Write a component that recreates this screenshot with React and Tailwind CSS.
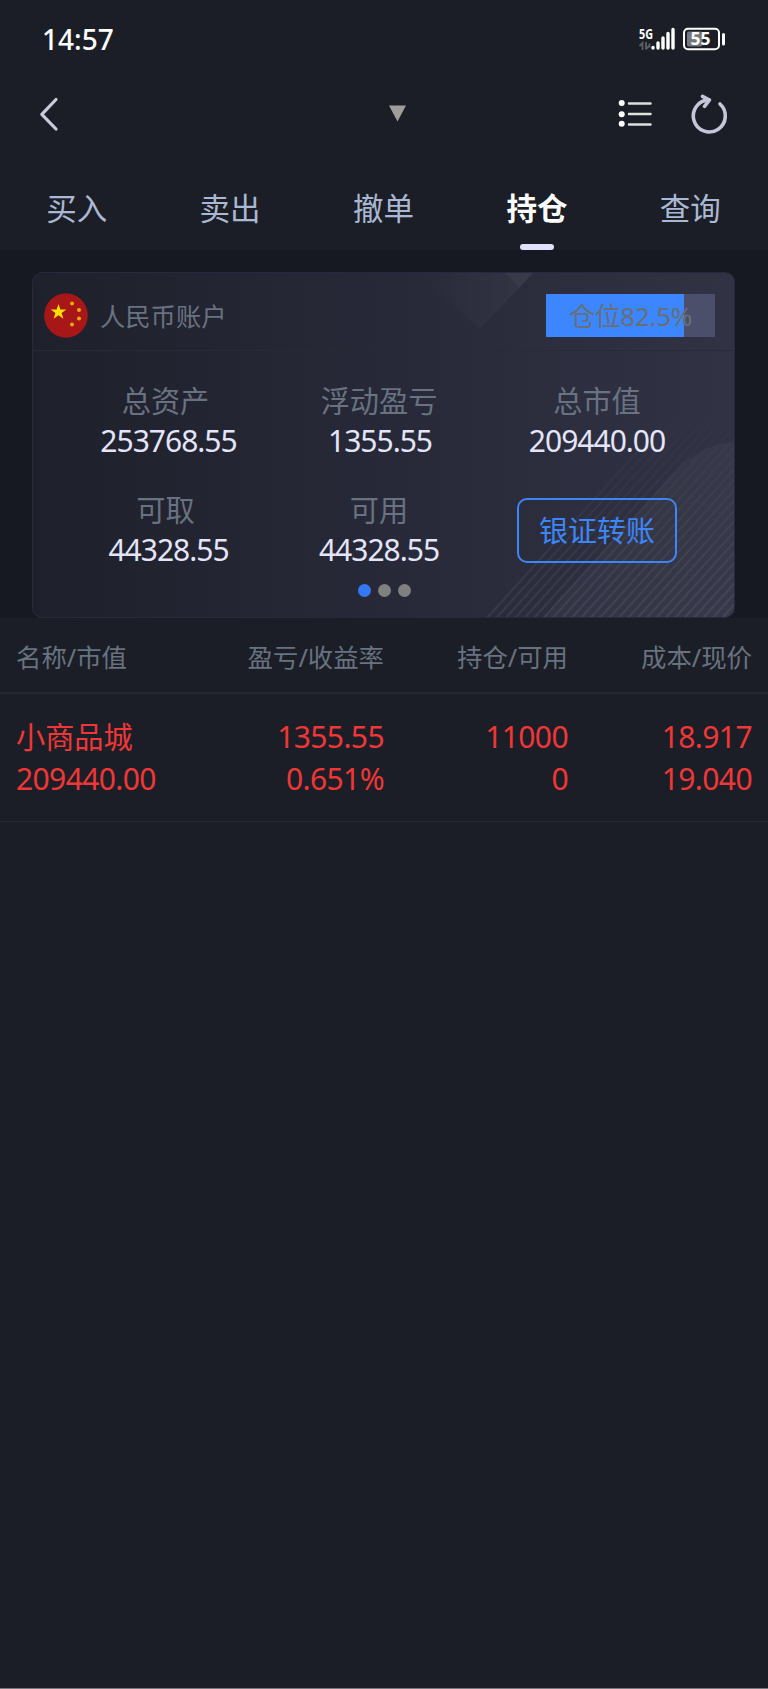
import clsx from 'clsx'

const tabs = ['买入', '卖出', '撤单', '持仓', '查询']

const headers = ['名称/市值', '盈亏/收益率', '持仓/可用', '成本/现价']

const positions = [
  {
    name: '小商品城',
    value: '209440.00',
    profit: '1355.55',
    rate: '0.651%',
    total: '11000',
    available: '0',
    cost: '18.917',
    price: '19.040',
  },
]

const columns = 'grid grid-cols-[184px_184px_184px_184px] pl-4'

function StatusBar() {
  return (
    <div className="flex h-[78px] items-center justify-between pb-px pl-[42px] pr-[42px]">
      <span className="text-[28px] font-medium leading-none text-white">14:57</span>
      <svg className="overflow-visible" width="88" height="30" viewBox="638 23.5 88 30">
        <text x="639" y="38.5" fill="#fff" fontSize="14" fontWeight="700" textLength="14" lengthAdjust="spacingAndGlyphs">5G</text>
        <g stroke="#5d5f66" strokeWidth="1.8" fill="none">
          <path d="M639.500 45.500l3-3v7M646 41.500v7.500M649.500 43v4M646 48.500l3-3" />
        </g>
        <g stroke="#fff" strokeWidth="3.4" strokeLinecap="round">
          <path d="M653 47v.6M658 42.500v5M663 37.500v10M668 33v14.500M673 29v18.500" />
        </g>
        <rect x="684" y="28.300" width="35" height="20.400" rx="4" fill="none" stroke="#fff" strokeWidth="2" />
        <rect x="687" y="31" width="15.500" height="15" rx="2" fill="#77787d" />
        <path d="M723.500 34v9.500" stroke="#fff" strokeWidth="3" strokeLinecap="round" />
        <text x="690.500" y="44.900" fill="#fff" fontSize="18" fontWeight="700" textLength="20" lengthAdjust="spacingAndGlyphs">55</text>
      </svg>
    </div>
  )
}

function NavBar() {
  return (
    <div className="flex h-[76px] items-center justify-between pb-1 pl-9 pr-[38px]">
      <svg width="26" height="40" viewBox="36 94 26 40" fill="none">
        <path d="M56 99.500L41.800 114.300L56 129" stroke="#c9cadd" strokeWidth="3.200" strokeLinecap="round" strokeLinejoin="round" />
      </svg>
      <svg className="ml-[116px]" width="18" height="18" viewBox="388 105.500 18 18">
        <path d="M389 106h17l-8.500 16z" fill="#a09e9d" />
      </svg>
      <svg width="114" height="46" viewBox="616 92 114 46" fill="none">
        <g fill="#fff">
          <circle cx="621.700" cy="104" r="3" />
          <circle cx="621.700" cy="115.300" r="3" />
          <circle cx="621.700" cy="124.800" r="3" />
        </g>
        <path d="M629 104.500h21.500M629 115h21.500M629 125.500h21.500" stroke="#e0e0e0" strokeWidth="2.500" strokeLinecap="round" />
        <g stroke="#c5c6d9" strokeWidth="3.600" strokeLinecap="round" strokeLinejoin="round">
          <path d="M720 105A16 16 0 1 1 709 100.900" />
          <path d="M702.500 97.300L709.500 101L704.500 107.300" />
        </g>
      </svg>
    </div>
  )
}

function Tabs({ active }) {
  return (
    <div className="grid h-24 w-[767px] grid-cols-5">
      {tabs.map((tab) => (
        <div
          key={tab}
          className={clsx(
            'flex flex-col items-center justify-between pt-[34px] text-[30.5px] leading-10',
            tab === active ? 'font-bold text-white' : 'text-[#aab8d3]'
          )}
        >
          <span>{tab}</span>
          {tab === active && <span className="h-1.5 w-[34px] rounded-sm bg-[#e2e0fb]" />}
        </div>
      ))}
    </div>
  )
}

function ChinaFlag() {
  return (
    <svg width="44" height="45" viewBox="0 0 44 45">
      <ellipse cx="22" cy="22.500" rx="21.800" ry="22.200" fill="#a71717" />
      <path d="M14.500 11l1.900 5.500h5.900l-4.700 3.500 1.800 5.700-4.900-3.500-4.900 3.500 1.800-5.700-4.700-3.500h5.900z" fill="#ffde00" />
      <g fill="#f0a80e">
        <circle cx="28" cy="10.500" r="2" />
        <circle cx="35" cy="17" r="2" />
        <circle cx="35" cy="25.500" r="2" />
        <circle cx="28" cy="31.500" r="2" />
      </g>
    </svg>
  )
}

// Faint triangles and diagonal stripes behind the card content
function CardPattern() {
  return (
    <svg className="absolute inset-0" width="703" height="346" viewBox="0 0 703 346" fill="none">
      <defs>
        <linearGradient id="tri" x1="0" y1="0" x2="1" y2="0">
          <stop offset="0" stopColor="#fff" stopOpacity="0" />
          <stop offset="1" stopColor="#fff" stopOpacity="0.04" />
        </linearGradient>
        <linearGradient id="fade" x1="0" y1="346" x2="0" y2="130" gradientUnits="userSpaceOnUse">
          <stop offset="0" stopColor="#fff" stopOpacity="0.07" />
          <stop offset="1" stopColor="#fff" stopOpacity="0" />
        </linearGradient>
      </defs>
      <path d="M385 0h115l-53 56z" fill="url(#tri)" />
      <path d="M473 0h27l-14 15z" fill="#fff" fillOpacity="0.03" />
      <path d="M509 346L630 211Q665 169 703 169V346z" fill="#fff" fillOpacity="0.03" />
      <g stroke="url(#fade)" strokeWidth="2">
        {Array.from({ length: 27 }, (_, i) => (
          <path key={i} d={`M${453 + i * 9.4} 346l190 -210`} />
        ))}
      </g>
    </svg>
  )
}

function Stat({ label, value, className }) {
  return (
    <div className="flex h-[109px] flex-col items-center">
      <span className="text-[29.2px] leading-10 text-[#687280]">{label}</span>
      <span className={clsx('text-[30px] leading-10 tracking-[-1px] text-[#e4e5fb]', className)}>{value}</span>
    </div>
  )
}

function AccountCard() {
  return (
    <div className="relative h-[346px] overflow-hidden rounded-[10px] border border-[#282940] bg-linear-to-r from-[#1e202b] via-[#272938] to-[#313345]">
      <CardPattern />
      <div className="relative flex h-full flex-col">
        <div className="flex h-[78px] items-center border-b border-[#282a35] pl-[11px] pr-[19px] pt-2">
          <ChinaFlag />
          <span className="ml-3 text-[25.3px] leading-10 text-[#687280]">人民币账户</span>
          <div className="ml-auto flex h-[43px] w-[169px] items-center justify-center bg-linear-to-r from-[#3c86ff] from-[81.6%] to-[#4c4f6c] to-[81.6%]">
            <span className="text-[26px] leading-10 tracking-[-0.3px] text-[#686f78]">仓位82.5%</span>
          </div>
        </div>
        <div className="grid grid-cols-[213px_214px_222px] pl-[26px] pt-[30px]">
          <Stat label="总资产" value="253768.55" className="pl-1.5" />
          <Stat label="浮动盈亏" value="1355.55" className="pl-0.5" />
          <Stat label="总市值" value="209440.00" />
          <Stat label="可取" value="44328.55" className="pl-1.5" />
          <Stat label="可用" value="44328.55" />
          <div className="flex justify-center pt-2">
            <button className="h-[65px] w-40 rounded-[10px] border-2 border-[#3c86f8] text-[29px] leading-10 text-[#3c86f8]">
              银证转账
            </button>
          </div>
        </div>
        <div className="-mt-[15px] flex justify-center gap-[7px] pl-0.5">
          <span className="size-[13px] rounded-full bg-[#3478f6]" />
          <span className="size-[13px] rounded-full bg-[#808080]" />
          <span className="size-[13px] rounded-full bg-[#808080]" />
        </div>
      </div>
    </div>
  )
}

function Cell({ top, bottom, className }) {
  return (
    <div className={clsx('flex flex-col tracking-[-0.6px]', className)}>
      <span>{top}</span>
      <span>{bottom}</span>
    </div>
  )
}

function PositionTable() {
  return (
    <div>
      <div className={clsx(columns, 'h-[76px] border-b-2 border-[#262833] pt-[19px] text-[25.4px] leading-10 text-[#687280]')}>
        {headers.map((header, i) => (
          <span key={header} className={i === 0 ? '' : 'text-right'}>{header}</span>
        ))}
      </div>
      {positions.map((p) => (
        <div key={p.name} className={clsx(columns, 'h-32 border-b border-[#252733] pt-[22px] text-[30px] leading-[42px] text-[#f03737]')}>
          <Cell top={<span className="text-[29.2px] tracking-normal">{p.name}</span>} bottom={p.value} />
          <Cell top={p.profit} bottom={p.rate} className="text-right" />
          <Cell top={p.total} bottom={p.available} className="text-right" />
          <Cell top={p.cost} bottom={p.price} className="text-right" />
        </div>
      ))}
    </div>
  )
}

export default function App() {
  return (
    <div className="flex h-[1689px] w-[768px] flex-col overflow-hidden border-b border-[#77757e] bg-[#1b1e26] font-['Noto_Sans','Noto_Sans_CJK_SC',sans-serif]">
      <StatusBar />
      <NavBar />
      <Tabs active="持仓" />
      <div className="h-[368px] bg-[#161922] pl-8 pr-[33px] pt-[22px]">
        <AccountCard />
      </div>
      <PositionTable />
    </div>
  )
}
